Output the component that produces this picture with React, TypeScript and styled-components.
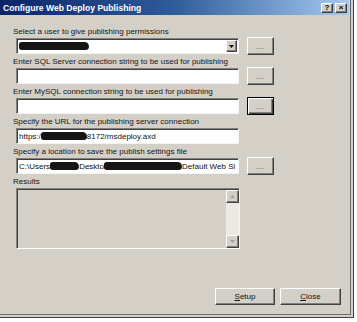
import styled, { createGlobalStyle } from 'styled-components';

const FONT = `'Liberation Sans', Arial, sans-serif`;
const FACE = '#d4d0c8';

const GlobalStyle = createGlobalStyle`
  html, body {
    margin: 0;
    padding: 0;
    background: #fff;
  }
  body {
    font-family: ${FONT};
  }
`;

const Window = styled.div`
  width: 354px;
  height: 318px;
  box-sizing: border-box;
  background: ${FACE};
  display: flex;
  flex-direction: column;
  box-shadow: inset -1px -1px 0 #404040, inset -3px -3px 0 ${FACE}, inset -4px -4px 0 #6a6a6a;
  font-family: ${FONT};
  font-size: 8px;
  color: #151515;
`;

const TitleBar = styled.div`
  height: 15px;
  margin-right: 5px;
  padding: 0 2px 0 3px;
  display: flex;
  align-items: center;
  justify-content: space-between;
  background: linear-gradient(to right, #0a246a 0%, #2f5c9a 50%, #a6caf0 100%);
`;

const Title = styled.span`
  color: #fff;
  font-weight: bold;
  font-size: 8.6px;
  white-space: nowrap;
`;

const TitleButtons = styled.div`
  display: flex;
  gap: 2px;
`;

const raised = `
  background: ${FACE};
  border: 1px solid;
  border-color: #fff #404040 #404040 #fff;
  box-shadow: inset -1px -1px 0 #808080;
  box-sizing: border-box;
`;

const TitleButton = styled.div`
  ${raised}
  width: 12px;
  height: 10px;
  display: flex;
  align-items: center;
  justify-content: center;
  font-size: 8px;
  font-weight: bold;
  color: #000;
  line-height: 1;
`;

const Body = styled.div`
  padding: 11px 0 0 13px;
  display: flex;
  flex-direction: column;
`;

const Field = styled.div`
  display: flex;
  flex-direction: column;
  margin-bottom: 1px;
`;

const Label = styled.div`
  height: 11px;
  line-height: 11px;
  white-space: nowrap;
`;

const Row = styled.div`
  height: 18px;
  display: flex;
  align-items: center;
  gap: 8px;
  padding-left: 3px;
`;

const sunken = `
  border: 1px solid;
  border-color: #808080 #f4f4f4 #f4f4f4 #808080;
  box-shadow: inset 1px 1px 0 #404040;
  box-sizing: border-box;
`;

const TextBox = styled.div`
  ${sunken}
  width: 223px;
  height: 16px;
  background: #fff;
  padding-left: 2px;
  display: flex;
  align-items: center;
  white-space: nowrap;
  overflow: hidden;
  color: #111;
`;

const ComboBox = styled(TextBox)`
  justify-content: space-between;
  padding-right: 1px;
`;

const DropButton = styled.div`
  ${raised}
  width: 11px;
  height: 12px;
  display: flex;
  align-items: center;
  justify-content: center;
`;

const Redacted = styled.span<{ $w: number }>`
  display: inline-block;
  flex: none;
  width: ${p => p.$w}px;
  height: 8px;
  background: #151515;
  border-radius: 3px 5px 4px 3px;
  filter: blur(0.7px);
`;

const DotsButton = styled.div<{ $focused?: boolean }>`
  ${raised}
  width: 27px;
  height: 18px;
  display: flex;
  align-items: center;
  justify-content: center;
  font-size: 8px;
  color: #444;
  letter-spacing: 0.5px;
  ${p => p.$focused && `
    border: 1px solid #000;
    box-shadow: inset 1px 1px 0 #fff, inset -1px -1px 0 #404040, inset -2px -2px 0 #808080;
  `}
`;

const ResultsBox = styled.div`
  ${sunken}
  margin: 1px 0 0 3px;
  width: 224px;
  height: 61px;
  background: ${FACE};
  border-bottom-color: #fff;
  display: flex;
  justify-content: flex-end;
  padding: 1px 0 0 1px;
`;

const ScrollBar = styled.div`
  width: 13px;
  display: flex;
  flex-direction: column;
  background: #ebe9e4;
`;

const ScrollArrow = styled.div`
  ${raised}
  width: 13px;
  height: 13px;
  display: flex;
  align-items: center;
  justify-content: center;
`;

const ScrollTrack = styled.div`
  flex: 1;
`;

const Footer = styled.div`
  margin-top: auto;
  padding: 0 13px 13px 0;
  display: flex;
  justify-content: flex-end;
  gap: 5px;
`;

const PushButton = styled.div<{ $w?: number }>`
  ${raised}
  width: ${p => p.$w ?? 60}px;
  height: 17px;
  display: flex;
  align-items: center;
  justify-content: center;
  font-size: 8px;
  color: #111;
`;

const Mnemonic = styled.span`
  text-decoration: underline;
`;

const Arrow = ({ up, color = '#000' }: { up?: boolean; color?: string }) => (
  <svg width="5" height="3" viewBox="0 0 5 3">
    <polygon points={up ? '0,3 5,3 2.5,0' : '0,0 5,0 2.5,3'} fill={color} />
  </svg>
);

export default function App() {
  return (
    <>
      <GlobalStyle />
      <Window>
        <TitleBar>
          <Title>Configure Web Deploy Publishing</Title>
          <TitleButtons>
            <TitleButton>?</TitleButton>
            <TitleButton>×</TitleButton>
          </TitleButtons>
        </TitleBar>
        <Body>
          <Field>
            <Label>Select a user to give publishing permissions</Label>
            <Row>
              <ComboBox>
                <Redacted $w={70} />
                <DropButton>
                  <Arrow />
                </DropButton>
              </ComboBox>
              <DotsButton>...</DotsButton>
            </Row>
          </Field>
          <Field>
            <Label>Enter SQL Server connection string to be used for publishing</Label>
            <Row>
              <TextBox />
              <DotsButton>...</DotsButton>
            </Row>
          </Field>
          <Field>
            <Label>Enter MySQL connection string to be used for publishing</Label>
            <Row>
              <TextBox />
              <DotsButton $focused>...</DotsButton>
            </Row>
          </Field>
          <Field>
            <Label>Specify the URL for the publishing server connection</Label>
            <Row>
              <TextBox>
                https:/
                <Redacted $w={46} />
                8172/msdeploy.axd
              </TextBox>
            </Row>
          </Field>
          <Field>
            <Label>Specify a location to save the publish settings file</Label>
            <Row>
              <TextBox>
                C:\Users
                <Redacted $w={29} />
                Deskto
                <Redacted $w={78} />
                Default Web Si
              </TextBox>
              <DotsButton>...</DotsButton>
            </Row>
          </Field>
          <Label>Results</Label>
          <ResultsBox>
            <ScrollBar>
              <ScrollArrow>
                <Arrow up color="#a0a0a0" />
              </ScrollArrow>
              <ScrollTrack />
              <ScrollArrow>
                <Arrow color="#a0a0a0" />
              </ScrollArrow>
            </ScrollBar>
          </ResultsBox>
        </Body>
        <Footer>
          <PushButton>
            <Mnemonic>S</Mnemonic>etup
          </PushButton>
          <PushButton $w={61}>
            <Mnemonic>C</Mnemonic>lose
          </PushButton>
        </Footer>
      </Window>
    </>
  );
}
